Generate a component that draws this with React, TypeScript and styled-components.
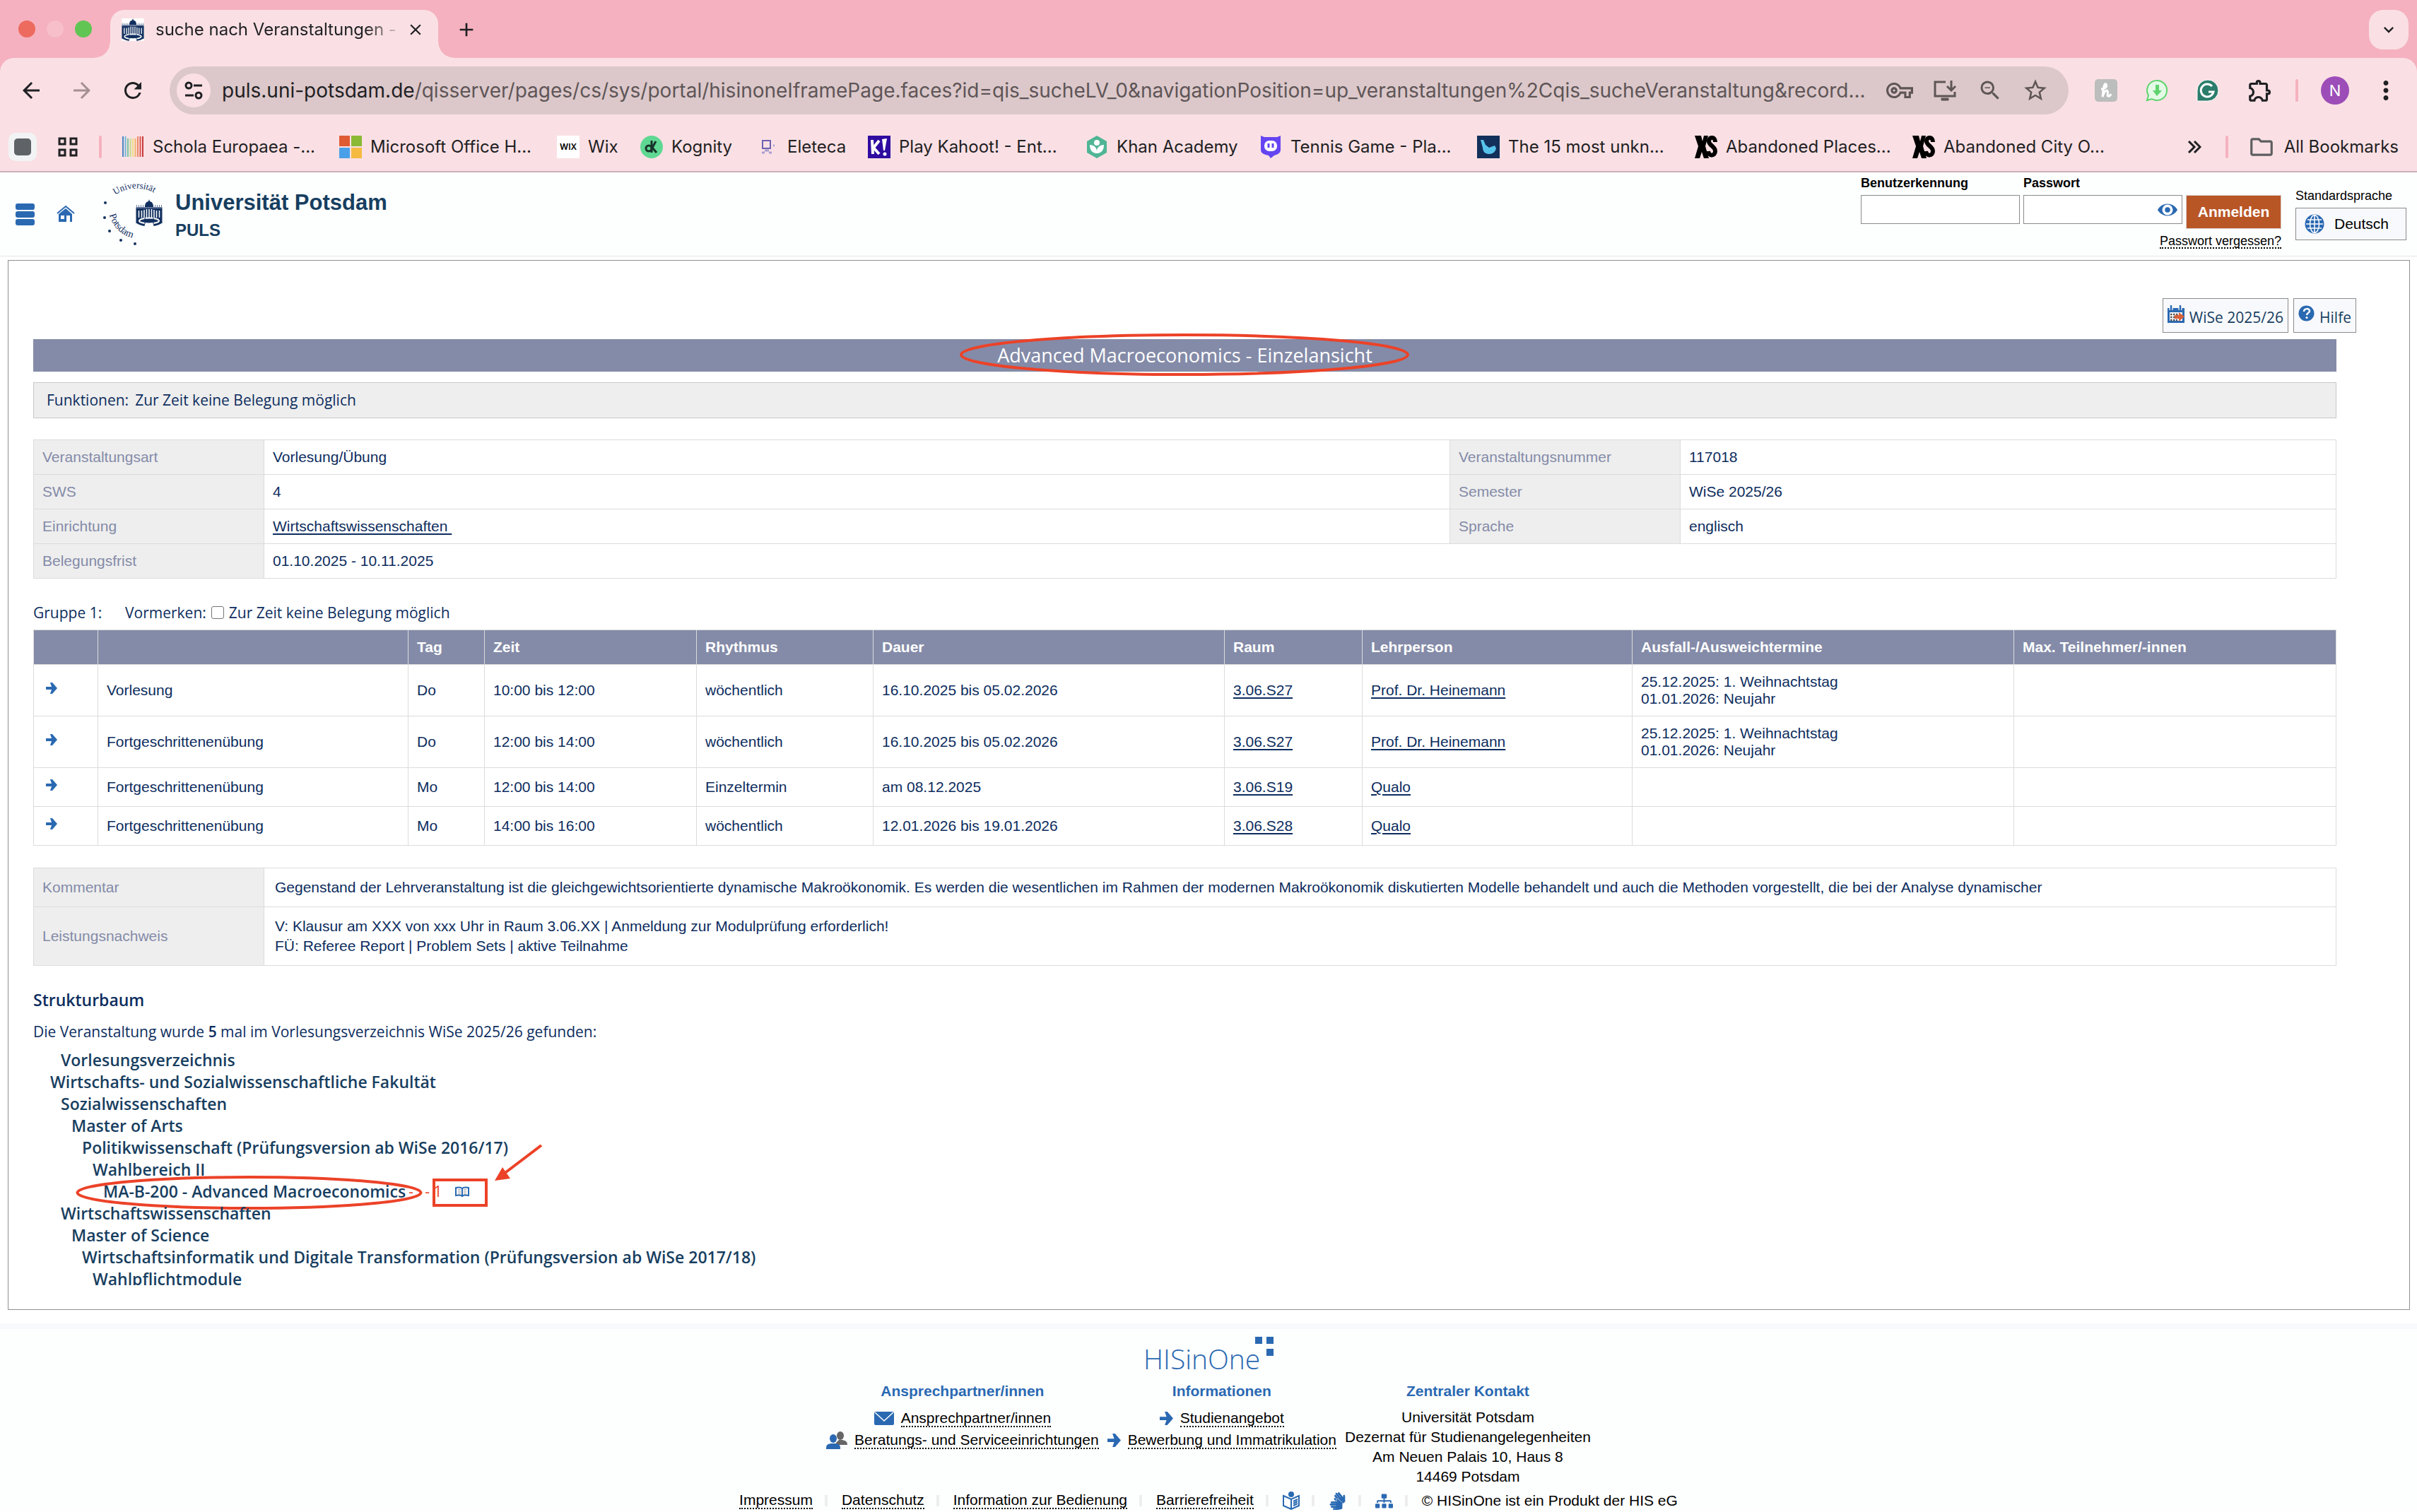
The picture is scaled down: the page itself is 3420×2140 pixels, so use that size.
import React from "react";
import styled, { createGlobalStyle } from "styled-components";
import {
  MdAdd,
  MdArrowBack,
  MdArrowForward,
  MdClose,
  MdExpandMore,
  MdMoreVert,
  MdOutlineExtension,
  MdOutlineFolder,
  MdOutlineVpnKey,
  MdRefresh,
  MdStarBorder,
  MdZoomOut,
} from "react-icons/md";
import { FaSignLanguage, FaSitemap } from "react-icons/fa";

const ui = `Inter, "Liberation Sans", sans-serif`;
const arial = `"Liberation Sans", Arial, sans-serif`;
const open = `"Open Sans", "Noto Sans", sans-serif`;
const navy = "#0d2d5e";
const deep = "#173e60";
const blue = "#2a69b2";
const slate = "#848ba8";
const mark = "#ec4228";
const line = "#dcdcdc";

const Global = createGlobalStyle`
  *, *::before, *::after { box-sizing: border-box; }
  body { margin: 0; background: #fff; font-family: ${arial}; }
  button { font: inherit; color: inherit; border: 0; padding: 0; background: none; cursor: pointer; }
  svg { display: block; flex: none; }
`;

/* ---------- browser frame ---------- */

const Frame = styled.header`
  background: #f5b1bf;
  font-family: ${ui};
  color: #1f2023;
  border-bottom: 2px solid #c9b1b8;
`;
const TabStrip = styled.div`
  display: flex;
  height: 82px;
  padding: 14px 12px 0 26px;
`;
const Lights = styled.div`
  display: flex;
  gap: 16px;
  padding-top: 15px;
  width: 130px;
`;
const Light = styled.span<{ $c: string }>`
  width: 24px;
  height: 24px;
  border-radius: 50%;
  background: ${(p) => p.$c};
`;
const Tab = styled.div`
  position: relative;
  display: flex;
  align-items: center;
  width: 464px;
  height: 68px;
  padding: 0 16px 12px;
  border-radius: 20px 20px 0 0;
  background: #fae0e4;
  &::before,
  &::after {
    content: "";
    position: absolute;
    bottom: 0;
    width: 22px;
    height: 22px;
  }
  &::before {
    left: -22px;
    background: radial-gradient(circle at 0 0, transparent 21px, #fae0e4 22px);
  }
  &::after {
    right: -22px;
    background: radial-gradient(circle at 100% 0, transparent 21px, #fae0e4 22px);
  }
`;
const TabTitle = styled.span`
  width: 350px;
  margin-left: 16px;
  white-space: nowrap;
  font-size: 24px;
  line-height: 32px;
  mask-image: linear-gradient(to right, #000 85%, transparent 100%);
`;
const IconButton = styled.button<{ $w?: number; $dim?: boolean }>`
  display: flex;
  align-items: center;
  justify-content: center;
  flex: none;
  width: ${(p) => p.$w ?? 64}px;
  height: 56px;
  color: ${(p) => (p.$dim ? "#a48f94" : "inherit")};
`;
const TabClose = styled(IconButton)`
  margin-left: 2px;
`;
const NewTab = styled(IconButton)`
  margin-left: 12px;
`;
const TabSearch = styled(IconButton)`
  margin-left: auto;
  border-radius: 20px;
  background: #fae0e4;
`;
const Chrome = styled.div`
  border-radius: 20px 20px 0 0;
  background: #fae0e4;
`;
const Toolbar = styled.div`
  display: flex;
  align-items: center;
  height: 92px;
  padding: 0 22px 0 12px;
`;
const Omnibox = styled.div`
  display: flex;
  align-items: center;
  flex: 1;
  min-width: 0;
  height: 68px;
  margin: 0 17px 0 20px;
  padding: 0 15px 0 10px;
  border-radius: 34px;
  background: #dcc8ca;
  color: #5e5557;
`;
const SiteInfo = styled(IconButton)`
  height: 48px;
  border-radius: 50%;
  background: #fae0e4;
  color: #1f2023;
`;
const Url = styled.div`
  flex: 1;
  min-width: 0;
  margin-left: 16px;
  overflow: hidden;
  white-space: nowrap;
  font-size: 28px;
  line-height: 40px;
  b {
    font-weight: 400;
    color: #1f2023;
  }
`;
const Rule = styled.span<{ $before?: number; $after?: number }>`
  flex: none;
  width: 4px;
  height: 32px;
  margin: 0 ${(p) => p.$after ?? 0}px 0 ${(p) => p.$before ?? 0}px;
  border-radius: 2px;
  background: #f5b1bf;
`;
const Avatar = styled.span`
  width: 40px;
  height: 40px;
  border-radius: 50%;
  background: #9c4db8;
  color: #fff;
  font-size: 22px;
  line-height: 40px;
  text-align: center;
`;
const Bookmarks = styled.nav`
  display: flex;
  align-items: center;
  height: 68px;
  padding: 0 26px 0 12px;
`;
const AppTile = styled.span`
  display: flex;
  align-items: center;
  justify-content: center;
  width: 40px;
  height: 40px;
  border-radius: 10px;
  background: #f1f3f4;
  &::before {
    content: "";
    width: 24px;
    height: 24px;
    border-radius: 5px;
    background: #5f6368;
  }
`;
const Bookmark = styled.a<{ $w: number }>`
  display: flex;
  align-items: center;
  gap: 12px;
  flex: none;
  width: ${(p) => p.$w}px;
  color: inherit;
  text-decoration: none;
  white-space: nowrap;
  font-size: 24px;
  line-height: 32px;
`;
const BookmarkList = styled.div`
  display: flex;
  flex: 1;
  margin-left: 28px;
`;
const AllMarks = styled.button`
  display: flex;
  align-items: center;
  gap: 13px;
  white-space: nowrap;
  font-size: 24px;
  line-height: 32px;
`;

const Tower = ({ size = 32, bg }: { size?: number; bg?: boolean }) => (
  <svg width={size} height={size} viewBox="0 0 37 38" aria-hidden="true">
    {bg && <rect width="37" height="38" fill="#fff" />}
    <path d="M18.500 0l1 3c4 1 5 4 5 8h-12c0-4 1-7 5-8z" fill="#12305f" />
    <path d="M1 8v3M4 8v3M7 8v3M10 8v3M27 8v3M30 8v3M33 8v3M36 8v3" stroke="#6d7ea0" strokeWidth="1" />
    <path d="M0 11h37v3H0z" fill="#5f7196" />
    <path d="M0 13h37v21H0z" fill="#12305f" />
    <path d="M4 16v10M8 16v10M11.500 15v11M15 14v12M18.500 14v12M22 14v12M25.500 15v11M29 16v10M33 16v10" stroke="#fff" strokeWidth="1.500" />
    <path d="M0 33h13l-1 5C7 37 3 36 0 33zM37 33H24l1 5c5-1 9-2 12-5z" fill="#12305f" />
    <ellipse cx="18.500" cy="30.500" rx="14" ry="4" fill="#12305f" stroke="#fff" strokeWidth="2" />
    <path d="M12.500 26v9M24.500 26v9" stroke="#12305f" strokeWidth="1" />
  </svg>
);

const Fav = ({ kind }: { kind: string }) => (
  <svg width="32" height="32" viewBox="0 0 32 32" aria-hidden="true">
    {kind === "schola" &&
      ["#4d86c6", "#6fb7d9", "#7cc4a4", "#c5d98a", "#f0dc8a", "#f2b56b", "#ee8a66", "#d9534f", "#c93a3a"].map((c, i) => (
        <rect key={c} x={1 + i * 3.5} y={i > 1 && i < 6 ? 4 : 1} width="2" height={i > 1 && i < 6 ? 26 : 29} fill={c} />
      ))}
    {kind === "ms" && (
      <>
        <rect width="15" height="15" fill="#df5b34" />
        <rect x="17" width="15" height="15" fill="#8ab936" />
        <rect y="17" width="15" height="15" fill="#4aa0e8" />
        <rect x="17" y="17" width="15" height="15" fill="#f5ba42" />
      </>
    )}
    {kind === "wix" && (
      <>
        <rect width="32" height="32" fill="#fff" />
        <text x="16" y="20" fontSize="12" fontWeight="600" fontFamily={ui} textAnchor="middle">WIX</text>
      </>
    )}
    {kind === "kognity" && (
      <>
        <circle cx="16" cy="16" r="16" fill="#5fd893" />
        <circle cx="12" cy="18" r="4" fill="none" stroke="#17352b" strokeWidth="3" />
        <path d="M16 7v17M22 8l-5 9 6 7" fill="none" stroke="#17352b" strokeWidth="3" />
      </>
    )}
    {kind === "eleteca" && (
      <>
        <path d="M9 7h11v11H9z" fill="none" stroke="#6c62b0" strokeWidth="2" />
        <path d="M8 24h4M18 24h4M24 14h2M12 21h6" stroke="#a79fd0" strokeWidth="3" />
      </>
    )}
    {kind === "kahoot" && (
      <>
        <rect width="32" height="32" fill="#2f0ba0" />
        <path d="M6 6l1 20M16 7L8 17l8 9" fill="none" stroke="#fff" strokeWidth="4" />
        <path d="M20 5l7-1-3 17h-2z" fill="#fff" />
        <circle cx="24" cy="26" r="2.500" fill="#fff" />
      </>
    )}
    {kind === "khan" && (
      <>
        <path d="M16 0l14 8v16l-14 8-14-8V8z" fill="#4fb595" />
        <circle cx="16" cy="10" r="4" fill="#fff" />
        <path d="M6 13c6 0 10 4 10 9 0-5 4-9 10-9 0 8-4 12-10 12S6 21 6 13z" fill="#fff" />
      </>
    )}
    {kind === "tennis" && (
      <>
        <path d="M2 0l5 2h18l5-2v20c0 5-5 7-9 8l-5 4-3-4C7 27 2 25 2 20z" fill="#6544f2" />
        <rect x="7" y="7" width="18" height="15" rx="7" fill="#fff" />
        <path d="M13 11v6M19 11v6" stroke="#6544f2" strokeWidth="3" />
      </>
    )}
    {kind === "fifteen" && (
      <>
        <rect width="32" height="32" fill="#12305a" />
        <path d="M5 6h4l3 7 5 4 8-3 2 4c-1 5-5 8-10 8-6 0-9-4-9-9z" fill="#57c3ea" />
      </>
    )}
    {kind === "xs" && (
      <>
        <path d="M0 0h9l2 8 2-8h6l-4 15 5 17h-7l-3-9-3 9H0l5-17z" />
        <path d="M29 9c0-8-9-8-9-1 0 6 9 7 9 14s-9 8-10 0" fill="none" stroke="#000" strokeWidth="6" />
      </>
    )}
  </svg>
);

const bookmarks: { kind: string; text: string; w: number }[] = [
  { kind: "schola", text: "Schola Europaea -...", w: 308 },
  { kind: "ms", text: "Microsoft Office H...", w: 308 },
  { kind: "wix", text: "Wix", w: 118 },
  { kind: "kognity", text: "Kognity", w: 164 },
  { kind: "eleteca", text: "Eleteca", w: 158 },
  { kind: "kahoot", text: "Play Kahoot! - Ent...", w: 308 },
  { kind: "khan", text: "Khan Academy", w: 246 },
  { kind: "tennis", text: "Tennis Game - Pla...", w: 308 },
  { kind: "fifteen", text: "The 15 most unkn...", w: 308 },
  { kind: "xs", text: "Abandoned Places...", w: 308 },
  { kind: "xs", text: "Abandoned City O...", w: 308 },
];

const Browser = () => (
  <Frame>
    <TabStrip>
      <Lights>
        <Light $c="#ed6a5e" />
        <Light $c="#f6bfca" />
        <Light $c="#61c554" />
      </Lights>
      <Tab>
        <Tower bg />
        <TabTitle>suche nach Veranstaltungen -</TabTitle>
        <TabClose $w={32} aria-label="Tab schließen"><MdClose size={26} /></TabClose>
      </Tab>
      <NewTab $w={56} aria-label="Neuer Tab"><MdAdd size={32} /></NewTab>
      <TabSearch $w={56} aria-label="Tabs suchen"><MdExpandMore size={28} /></TabSearch>
    </TabStrip>
    <Chrome>
      <Toolbar>
        <IconButton aria-label="Zurück"><MdArrowBack size={36} /></IconButton>
        <IconButton $w={80} $dim aria-label="Vorwärts"><MdArrowForward size={36} /></IconButton>
        <IconButton aria-label="Neu laden"><MdRefresh size={36} /></IconButton>
        <Omnibox>
          <SiteInfo $w={48} aria-label="Website-Informationen">
            <svg width="26" height="26" viewBox="0 0 26 26" fill="none" stroke="currentColor" strokeWidth="3">
              <circle cx="6" cy="6" r="4" />
              <path d="M13 6h12M1 20h12" />
              <circle cx="20" cy="20" r="4" />
            </svg>
          </SiteInfo>
          <Url>
            <b>puls.uni-potsdam.de</b>/qisserver/pages/cs/sys/portal/hisinoneIframePage.faces?id=qis_sucheLV_0&amp;navigationPosition=up_veranstaltungen%2Cqis_sucheVeranstaltung&amp;record...
          </Url>
          <IconButton aria-label="Passwörter"><MdOutlineVpnKey size={38} /></IconButton>
          <IconButton aria-label="Installieren">
            <svg width="32" height="30" viewBox="0 0 32 30" fill="none" stroke="currentColor" strokeWidth="3">
              <path d="M17 3H2v20h28v-6" />
              <path d="M25 1v12M19 9l6 6 6-6" />
              <path d="M11 26h10v3H11z" fill="currentColor" strokeWidth="1" />
            </svg>
          </IconButton>
          <IconButton aria-label="Zoom"><MdZoomOut size={36} /></IconButton>
          <IconButton aria-label="Lesezeichen"><MdStarBorder size={38} /></IconButton>
        </Omnibox>
        <IconButton $w={72} aria-label="Honey">
          <svg width="32" height="32" viewBox="0 0 32 32">
            <rect width="32" height="32" rx="5" fill="#bcbdbd" />
            <path d="M9 14c6 0 9-4 7-7-3-2-4 8-5 18 2-6 4-9 6-9 3 0 0 8 2 8 2 1 3-1 4-3" fill="none" stroke="#fff" strokeWidth="3" />
          </svg>
        </IconButton>
        <IconButton $w={72} aria-label="Download">
          <svg width="32" height="32" viewBox="0 0 32 32">
            <path d="M2 30l2-7A14 14 0 1 1 9 28z" fill="#e4fae6" stroke="#5fd36e" strokeWidth="2" />
            <path d="M14 8h5v8h4l-7 8-6-8h4z" fill="#5fd36e" />
          </svg>
        </IconButton>
        <IconButton $w={72} aria-label="Grammarly">
          <svg width="32" height="32" viewBox="0 0 32 32">
            <path d="M1 31V16A15 15 0 1 1 16 31z" fill="#2b7d6b" stroke="#fff" />
            <path d="M22 10a9 9 0 1 0 2 8h-7" fill="none" stroke="#fff" strokeWidth="3" />
          </svg>
        </IconButton>
        <IconButton $w={76} aria-label="Erweiterungen"><MdOutlineExtension size={38} /></IconButton>
        <Rule $before={12} $after={2} />
        <IconButton $w={100} aria-label="Profil"><Avatar>N</Avatar></IconButton>
        <IconButton $w={44} aria-label="Menü"><MdMoreVert size={42} /></IconButton>
      </Toolbar>
      <Bookmarks aria-label="Lesezeichen">
        <AppTile />
        <IconButton $w={88} aria-label="Apps">
          <svg width="28" height="28" viewBox="0 0 28 28" fill="none" stroke="currentColor" strokeWidth="3">
            <path d="M2 2h8v8H2zM18 2h8v8h-8zM2 18h8v8H2zM18 18h8v8h-8z" />
          </svg>
        </IconButton>
        <Rule />
        <BookmarkList>
          {bookmarks.map((b) => (
            <Bookmark key={b.text} $w={b.w} href="#">
              <Fav kind={b.kind} />
              {b.text}
            </Bookmark>
          ))}
        </BookmarkList>
        <IconButton $w={88} aria-label="Weitere Lesezeichen">
          <svg width="20" height="18" viewBox="0 0 20 18" fill="none" stroke="currentColor" strokeWidth="3">
            <path d="M2 1l8 8-8 8M10 1l8 8-8 8" />
          </svg>
        </IconButton>
        <Rule $after={28} />
        <AllMarks>
          <MdOutlineFolder size={38} color="#5e5e60" />
          All Bookmarks
        </AllMarks>
      </Bookmarks>
    </Chrome>
  </Frame>
);

/* ---------- portal head ---------- */

const Head = styled.header`
  display: flex;
  align-items: flex-start;
  height: 119px;
  padding: 0 15px 0 22px;
  border-bottom: 1px solid #e6e6e8;
  background: #fdfefe;
`;
const Brand = styled.div`
  display: flex;
  align-items: center;
  height: 118px;
`;
const MenuButton = styled.button`
  display: grid;
  gap: 2px;
  width: 27px;
  margin-right: 31px;
  span {
    height: 9px;
    border-radius: 3px;
    background: ${blue};
  }
`;
const HomeLink = styled.a`
  margin-right: 40px;
`;
const BrandText = styled.div`
  margin-left: 18px;
  padding-top: 8px;
  color: ${deep};
  font-weight: 700;
`;
const University = styled.div`
  font-size: 31px;
  line-height: 38px;
`;
const Portal = styled.div`
  font-size: 24px;
  line-height: 40px;
`;
const Login = styled.form`
  display: grid;
  grid-template-columns: 225px 225px 135px;
  gap: 5px;
  align-items: start;
  margin-left: auto;
  padding-top: 3px;
  font-size: 18px;
  line-height: 24px;
  color: #000;
`;
const FieldLabel = styled.label`
  font-weight: 700;
`;
const Field = styled.input`
  width: 100%;
  height: 41px;
  border: 1px solid #8b8b8b;
  border-radius: 0;
  background: #fff;
`;
const SubmitButton = styled.button`
  grid-row: 2;
  grid-column: 3;
  height: 48px;
  border: 1px solid #d9cfca;
  background: #b95626;
  color: #fff;
  font-size: 21px;
  font-weight: 700;
`;
const PasswordBox = styled.div`
  position: relative;
`;
const Eye = styled.button`
  position: absolute;
  right: 6px;
  top: 10px;
`;
const Forgot = styled.a`
  grid-column: 1 / -1;
  justify-self: end;
  margin-top: 3px;
  color: inherit;
  text-decoration: none;
  line-height: 18px;
  border-bottom: 2px dotted #000;
`;
const Language = styled.div`
  display: grid;
  gap: 5px;
  width: 157px;
  margin-left: 20px;
  padding-top: 21px;
  font-size: 18px;
  line-height: 24px;
`;
const LanguageButton = styled.button`
  display: flex;
  align-items: center;
  gap: 14px;
  height: 46px;
  padding: 0 12px;
  border: 1px solid #8b8b8b;
  background: #f8f9fc;
  font-size: 21px;
`;

const PortalHead = () => (
  <Head>
    <Brand>
      <MenuButton aria-label="Menü"><span /><span /><span /></MenuButton>
      <HomeLink href="#" aria-label="Startseite">
        <svg width="26" height="26" viewBox="0 0 26 26">
          <path d="M1 12L13 2l12 10" fill="none" stroke={blue} strokeWidth="2" />
          <path d="M13 5l9 8v11h-3v-9h-5v9H3V13z" fill={blue} />
          <path d="M6 15h5v5H6z" fill="#fdfefe" />
        </svg>
      </HomeLink>
      <svg width="84" height="90" viewBox="0 0 84 90" fontFamily='"Liberation Serif", serif' fill="#12305f">
        <path id="arcTop" d="M17 18A53 53 0 0 1 80 20" fill="none" />
        <path id="arcLow" d="M9 46A44 44 0 0 0 52 80" fill="none" />
        <text fontSize="13"><textPath href="#arcTop">Universität</textPath></text>
        <text fontSize="14"><textPath href="#arcLow">Potsdam</textPath></text>
        <circle cx="3" cy="29" r="2" />
        <circle cx="2" cy="50" r="2" />
        <circle cx="9" cy="69" r="2" />
        <circle cx="25" cy="82" r="2" />
        <circle cx="45" cy="87" r="2" />
        <g transform="translate(46 24)">
          <Tower size={38} />
        </g>
      </svg>
      <BrandText>
        <University>Universität Potsdam</University>
        <Portal>PULS</Portal>
      </BrandText>
    </Brand>
    <Login>
      <FieldLabel htmlFor="user">Benutzerkennung</FieldLabel>
      <FieldLabel htmlFor="pass">Passwort</FieldLabel>
      <span />
      <Field id="user" type="text" />
      <PasswordBox>
        <Field id="pass" type="password" />
        <Eye type="button" aria-label="Passwort anzeigen">
          <svg width="30" height="22" viewBox="0 0 32 22">
            <path d="M1 11C8-1 24-1 31 11 24 23 8 23 1 11z" fill={blue} />
            <circle cx="16" cy="11" r="8" fill="#fff" />
            <circle cx="16" cy="11" r="4" fill={blue} />
          </svg>
        </Eye>
      </PasswordBox>
      <SubmitButton type="button">Anmelden</SubmitButton>
      <Forgot href="#">Passwort vergessen?</Forgot>
    </Login>
    <Language>
      <span>Standardsprache</span>
      <LanguageButton>
        <svg width="28" height="28" viewBox="0 0 28 28">
          <circle cx="14" cy="14" r="13.500" fill={blue} />
          <path d="M2 14h24M4 8h20M4 20h20M14 1v26" stroke="#fff" strokeWidth="1.500" />
          <ellipse cx="14" cy="14" rx="6.500" ry="12.500" fill="none" stroke="#fff" strokeWidth="1.500" />
        </svg>
        Deutsch
      </LanguageButton>
    </Language>
  </Head>
);

/* ---------- course panel ---------- */

const Panel = styled.main`
  margin: 5px 10px 0 11px;
  padding: 53px 75px 34px 35px;
  border: 1px solid #8f8f8f;
  color: ${navy};
  font-size: 21px;
`;
const Actions = styled.div`
  display: flex;
  justify-content: flex-end;
  gap: 7px;
  margin-bottom: 9px;
  font-family: ${open};
  color: ${deep};
`;
const Action = styled.button`
  display: flex;
  align-items: flex-start;
  gap: 7px;
  height: 49px;
  padding: 9px 6px;
  border: 1px solid #8b8b8b;
  background: #f8f9fc;
  font-size: 21px;
  line-height: 34px;
`;
const Sheet = styled.div`
  margin-right: 28px;
`;
const TitleBar = styled.h1`
  margin: 0 0 15px;
  background: ${slate};
  color: #fff;
  font-family: ${open};
  font-size: 27px;
  font-weight: 400;
  line-height: 46px;
  text-align: center;
`;
const Circled = styled.span`
  position: relative;
`;
const TitleMark = styled.svg`
  position: absolute;
  left: 50%;
  top: 50%;
  transform: translate(-50%, -50%);
  overflow: visible;
`;
const Functions = styled.div`
  display: flex;
  gap: 9px;
  height: 51px;
  margin-bottom: 30px;
  padding: 0 18px;
  border: 1px solid #c8c8c8;
  background: #eee;
  font-family: ${open};
  line-height: 48px;
`;
const Grid = styled.table`
  width: 100%;
  table-layout: fixed;
  border-collapse: collapse;
  border: 1px solid ${line};
  th,
  td {
    border: 1px solid ${line};
    padding: 12px;
    line-height: 24px;
    text-align: left;
    font-weight: 400;
  }
`;
const Col = styled.col<{ $w?: number }>`
  width: ${(p) => (p.$w ? `${p.$w}px` : "auto")};
`;
const InfoTable = styled(Grid)`
  tbody th {
    background: #eee;
    color: ${slate};
  }
`;
const CommentTable = styled(InfoTable)`
  margin-top: 31px;
  td {
    padding: 13px 15px;
    line-height: 28px;
  }
`;
const DatesTable = styled(Grid)`
  thead th {
    background: ${slate};
    color: #fff;
    font-weight: 700;
  }
  tbody td {
    height: 55px;
  }
  tbody td:first-child {
    padding: 0 17px 6px;
  }
`;
const Link = styled.a`
  color: inherit;
  text-decoration: underline;
  text-decoration-thickness: 2px;
  text-underline-offset: 3px;
  white-space: pre;
`;
const GroupLine = styled.div`
  display: flex;
  margin-top: 33px;
  padding-bottom: 9px;
  font-family: ${open};
  line-height: 30px;
`;
const Group = styled.span`
  width: 130px;
`;
const Remember = styled.label`
  display: flex;
  align-items: center;
  gap: 7px;
`;
const Check = styled.input`
  appearance: none;
  width: 18px;
  height: 18px;
  margin: 0;
  border: 1px solid #767676;
  border-radius: 3px;
  background: #fff;
`;
const TreeHeading = styled.h2`
  margin: 33px 0 15px;
  font-family: ${open};
  font-size: 23px;
  font-weight: 600;
  line-height: 30px;
`;
const Found = styled.p`
  margin: 0 0 10px;
  font-family: ${open};
  line-height: 30px;
  b {
    font-weight: 600;
  }
`;
const Tree = styled.ul`
  height: 334px;
  margin: 0;
  padding: 0 0 0 24px;
  overflow: hidden;
  list-style: none;
  color: ${deep};
  font-family: ${open};
  font-size: 23px;
  font-weight: 600;
  line-height: 31px;
`;
const Node = styled.li<{ $level: number }>`
  display: flex;
  height: 31px;
  padding-left: ${(p) => p.$level * 15}px;
`;
const NodeLink = styled.a`
  position: relative;
  color: inherit;
  text-decoration: none;
`;
const Count = styled.span`
  position: relative;
  display: flex;
  align-items: center;
  gap: 18px;
  margin-left: 4px;
  color: ${mark};
  font-size: 21px;
  font-weight: 400;
  white-space: pre;
`;
const NodeMark = styled.svg`
  position: absolute;
  left: -39px;
  top: -7px;
`;
const CountMark = styled.svg`
  position: absolute;
  right: -106px;
  top: -51px;
`;

const BlueArrow = ({ size = 16 }: { size?: number }) => (
  <svg width={size} height={size} viewBox="0 0 16 16" fill={blue} aria-hidden="true">
    <path d="M0 6h8L6 0h3l7 8-7 8H6l2-6H0z" />
  </svg>
);

const sessions = [
  ["Vorlesung", "Do", "10:00 bis 12:00", "wöchentlich", "16.10.2025 bis 05.02.2026", "3.06.S27", "Prof. Dr. Heinemann"],
  ["Fortgeschrittenenübung", "Do", "12:00 bis 14:00", "wöchentlich", "16.10.2025 bis 05.02.2026", "3.06.S27", "Prof. Dr. Heinemann"],
  ["Fortgeschrittenenübung", "Mo", "12:00 bis 14:00", "Einzeltermin", "am 08.12.2025", "3.06.S19", "Qualo"],
  ["Fortgeschrittenenübung", "Mo", "14:00 bis 16:00", "wöchentlich", "12.01.2026 bis 19.01.2026", "3.06.S28", "Qualo"],
];
const heads = ["", "", "Tag", "Zeit", "Rhythmus", "Dauer", "Raum", "Lehrperson", "Ausfall-/Ausweichtermine", "Max. Teilnehmer/-innen"];
const widths = [91, 439, 108, 300, 250, undefined, 195, 382, 540, 456];

const tree: [number, string][] = [
  [1, "Vorlesungsverzeichnis"],
  [0, "Wirtschafts- und Sozialwissenschaftliche Fakultät"],
  [1, "Sozialwissenschaften"],
  [2, "Master of Arts"],
  [3, "Politikwissenschaft (Prüfungsversion ab WiSe 2016/17)"],
  [4, "Wahlbereich II"],
  [5, "MA-B-200 - Advanced Macroeconomics"],
  [1, "Wirtschaftswissenschaften"],
  [2, "Master of Science"],
  [3, "Wirtschaftsinformatik und Digitale Transformation (Prüfungsversion ab WiSe 2017/18)"],
  [4, "Wahlpflichtmodule"],
];

const Course = () => (
  <Panel>
    <Actions>
      <Action>
        <svg width="24" height="26" viewBox="0 0 24 26">
          <path d="M0 4h24v21H0z" fill={blue} />
          <path d="M3 10h18v12H3z" fill="#fff" />
          <path d="M5 0v7M18 0v7" stroke="#fff" strokeWidth="5" />
          <path d="M5 0v7M18 0v7" stroke={blue} strokeWidth="2.500" />
          <path d="M4 13h14M4 17h14M4 21h10" stroke="#555" strokeWidth="2.500" strokeDasharray="2.500 1.500" />
          <path d="M10 14h6v-4l8 6-8 7v-4h-6z" fill="#d8603a" />
        </svg>
        WiSe 2025/26
      </Action>
      <Action>
        <svg width="23" height="23" viewBox="0 0 23 23">
          <circle cx="11.500" cy="11.500" r="11" fill={blue} />
          <path d="M8 9c0-5 8-5 8-1 0 3-4 3-4 6" fill="none" stroke="#fff" strokeWidth="2.500" />
          <circle cx="12" cy="17.500" r="1.600" fill="#fff" />
        </svg>
        Hilfe
      </Action>
    </Actions>
    <Sheet>
      <TitleBar>
        <Circled>
          Advanced Macroeconomics - Einzelansicht
          <TitleMark width="636" height="62" viewBox="0 0 636 62" fill="none" stroke={mark} strokeWidth="4">
            <ellipse cx="318" cy="30" rx="316" ry="28" />
          </TitleMark>
        </Circled>
      </TitleBar>
      <Functions>
        <span>Funktionen:</span>
        <span>Zur Zeit keine Belegung möglich</span>
      </Functions>
      <InfoTable>
        <colgroup><Col $w={326} /><Col /><Col $w={326} /><Col $w={928} /></colgroup>
        <tbody>
          <tr><th scope="row">Veranstaltungsart</th><td>Vorlesung/Übung</td><th scope="row">Veranstaltungsnummer</th><td>117018</td></tr>
          <tr><th scope="row">SWS</th><td>4</td><th scope="row">Semester</th><td>WiSe 2025/26</td></tr>
          <tr><th scope="row">Einrichtung</th><td><Link href="#">{"Wirtschaftswissenschaften "}</Link></td><th scope="row">Sprache</th><td>englisch</td></tr>
          <tr><th scope="row">Belegungsfrist</th><td colSpan={3}>01.10.2025 - 10.11.2025</td></tr>
        </tbody>
      </InfoTable>
      <GroupLine>
        <Group>Gruppe 1:</Group>
        <Remember>
          Vormerken:
          <Check type="checkbox" />
          Zur Zeit keine Belegung möglich
        </Remember>
      </GroupLine>
      <DatesTable>
        <colgroup>{widths.map((w, i) => <Col key={i} $w={w} />)}</colgroup>
        <thead><tr>{heads.map((h, i) => <th key={i} scope="col">{h}</th>)}</tr></thead>
        <tbody>
          {sessions.map((s, i) => (
            <tr key={i}>
              <td><BlueArrow /></td>
              {s.map((cell, j) => <td key={j}>{j > 4 ? <Link href="#">{cell}</Link> : cell}</td>)}
              <td>{i < 2 && <>25.12.2025: 1. Weihnachtstag<br />01.01.2026: Neujahr</>}</td>
              <td />
            </tr>
          ))}
        </tbody>
      </DatesTable>
      <CommentTable>
        <colgroup><Col $w={326} /><Col /></colgroup>
        <tbody>
          <tr>
            <th scope="row">Kommentar</th>
            <td>Gegenstand der Lehrveranstaltung ist die gleichgewichtsorientierte dynamische Makroökonomik. Es werden die wesentlichen im Rahmen der modernen Makroökonomik diskutierten Modelle behandelt und auch die Methoden vorgestellt, die bei der Analyse dynamischer</td>
          </tr>
          <tr>
            <th scope="row">Leistungsnachweis</th>
            <td>V: Klausur am XXX von xxx Uhr in Raum 3.06.XX | Anmeldung zur Modulprüfung erforderlich!<br />FÜ: Referee Report | Problem Sets | aktive Teilnahme</td>
          </tr>
        </tbody>
      </CommentTable>
      <TreeHeading>Strukturbaum</TreeHeading>
      <Found>Die Veranstaltung wurde <b>5</b> mal im Vorlesungsverzeichnis WiSe 2025/26 gefunden:</Found>
      <Tree>
        {tree.map(([level, text]) => (
          <Node key={text} $level={level}>
            <NodeLink href="#">
              {text}
              {level === 5 && (
                <NodeMark width="491" height="48" viewBox="0 0 491 48" fill="none" stroke={mark} strokeWidth="4">
                  <ellipse cx="245.500" cy="24" rx="243" ry="22" />
                </NodeMark>
              )}
            </NodeLink>
            {level === 5 && (
              <Count>
                {"-   - 1"}
                <svg width="20" height="16" viewBox="0 0 20 16">
                  <path d="M1 2c4-1 7-1 9 1 2-2 5-2 9-1v11c-4-1-7-1-9 1-2-2-5-2-9-1z" fill="#fff" stroke={blue} strokeWidth="2" />
                  <path d="M10 3v11" stroke={blue} strokeWidth="2" />
                  <path d="M4 5h4M4 8h4M4 11h4M12 5h4M12 8h4M12 11h4" stroke="#888" strokeWidth="1" />
                </svg>
                <CountMark width="158" height="90" viewBox="0 0 158 90" fill="none" stroke={mark}>
                  <rect x="2" y="50" width="74" height="36" strokeWidth="4" />
                  <path d="M154 1L100 42" strokeWidth="4" />
                  <path d="M88 51l11-19 11 16z" fill={mark} stroke="none" />
                </CountMark>
              </Count>
            )}
          </Node>
        ))}
      </Tree>
    </Sheet>
  </Panel>
);

/* ---------- footer ---------- */

const Foot = styled.footer`
  display: flex;
  flex-direction: column;
  align-items: center;
  margin-top: 19px;
  padding: 11px 0 1px;
  border-top: 8px solid #f8f9fc;
  background: #fdfefe;
  color: #000;
  font-size: 21px;
`;
const FootColumns = styled.div`
  display: flex;
  gap: 12px;
  margin-top: 8px;
`;
const FootColumn = styled.section`
  display: flex;
  flex-direction: column;
  align-items: center;
  line-height: 28px;
`;
const FootHeading = styled.h3`
  margin: 0 0 9px;
  color: ${blue};
  font-size: 21px;
  line-height: 28px;
`;
const FootRow = styled.div`
  display: flex;
  align-items: center;
  gap: 10px;
  height: 31px;
`;
const DottedLink = styled.a`
  color: inherit;
  text-decoration: none;
  line-height: 22px;
  border-bottom: 2px dotted #000;
`;
const Legal = styled.nav`
  display: flex;
  align-items: center;
  gap: 18px;
  height: 26px;
  margin-top: 7px;
`;
const Divider = styled.span`
  width: 4px;
  height: 16px;
  margin: 0 2px 0 -1px;
  background: #eee;
`;

const Footer = () => (
  <Foot>
    <svg width="184" height="55" viewBox="0 0 184 55" fill={blue}>
      <text x="0" y="46" fontFamily={open} fontWeight="300" fontSize="39">HISinOne</text>
      <rect x="158" y="0" width="10" height="10" />
      <rect x="174" y="0" width="10" height="10" />
      <rect x="174" y="17" width="10" height="10" />
    </svg>
    <FootColumns>
      <FootColumn>
        <FootHeading>Ansprechpartner/innen</FootHeading>
        <FootRow>
          <svg width="28" height="19" viewBox="0 0 28 19">
            <rect width="28" height="19" rx="2" fill={blue} />
            <path d="M1 1l13 12L27 1" fill="none" stroke="#fff" strokeWidth="1.500" />
          </svg>
          <DottedLink href="#">Ansprechpartner/innen</DottedLink>
        </FootRow>
        <FootRow>
          <svg width="30" height="25" viewBox="0 0 30 25">
            <ellipse cx="20" cy="6" rx="5" ry="6" fill="#666" />
            <path d="M14 19v-3l4-4h5c5 1 7 3 7 7z" fill="#666" />
            <ellipse cx="10" cy="10" rx="5" ry="6" fill={blue} />
            <path d="M0 25c0-6 1-7 7-8h6c6 1 7 2 7 8z" fill={blue} />
          </svg>
          <DottedLink href="#">Beratungs- und Serviceeinrichtungen</DottedLink>
        </FootRow>
      </FootColumn>
      <FootColumn>
        <FootHeading>Informationen</FootHeading>
        <FootRow><BlueArrow size={19} /><DottedLink href="#">Studienangebot</DottedLink></FootRow>
        <FootRow><BlueArrow size={19} /><DottedLink href="#">Bewerbung und Immatrikulation</DottedLink></FootRow>
      </FootColumn>
      <FootColumn>
        <FootHeading>Zentraler Kontakt</FootHeading>
        <span>Universität Potsdam</span>
        <span>Dezernat für Studienangelegenheiten</span>
        <span>Am Neuen Palais 10, Haus 8</span>
        <span>14469 Potsdam</span>
      </FootColumn>
    </FootColumns>
    <Legal>
      <DottedLink href="#">Impressum</DottedLink><Divider />
      <DottedLink href="#">Datenschutz</DottedLink><Divider />
      <DottedLink href="#">Information zur Bedienung</DottedLink><Divider />
      <DottedLink href="#">Barrierefreiheit</DottedLink><Divider />
      <svg width="24" height="26" viewBox="0 0 24 26">
        <circle cx="12" cy="4" r="4" fill={blue} />
        <path d="M1 6l11 5 11-5v14l-11 5-11-5z" fill="#fff" stroke={blue} strokeWidth="2" />
        <path d="M12 11v14M15 14l6-3M15 17l6-3M15 20l6-3" stroke={blue} strokeWidth="2" />
      </svg>
      <Divider />
      <FaSignLanguage size={25} color={blue} />
      <Divider />
      <FaSitemap size={25} color={blue} />
      <Divider />
      <span>© HISinOne ist ein Produkt der HIS eG</span>
    </Legal>
  </Foot>
);

export default function App() {
  return (
    <>
      <Global />
      <Browser />
      <PortalHead />
      <Course />
      <Footer />
    </>
  );
}
